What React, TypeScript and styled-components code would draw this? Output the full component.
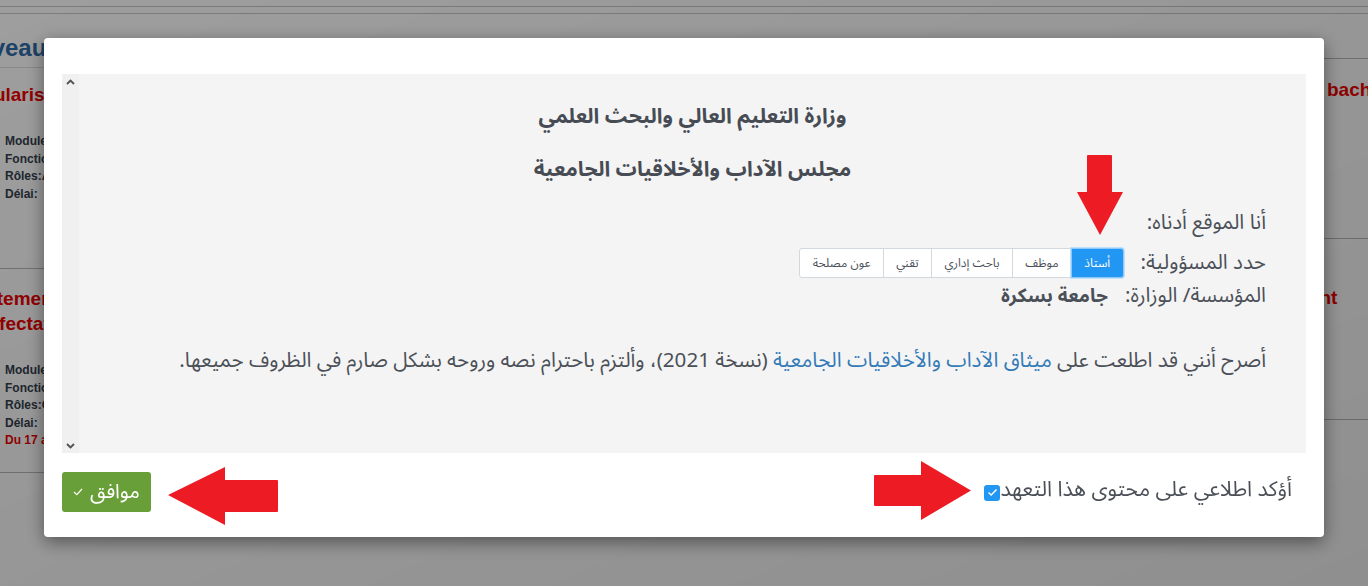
import React from "react";
import styled, { createGlobalStyle } from "styled-components";

const Global = createGlobalStyle`
  html, body { margin: 0; padding: 0; }
  body {
    width: 1368px;
    height: 586px;
    overflow: hidden;
    background: #fff;
    font-family: "Liberation Sans", Arial, sans-serif;
  }
`;

const arabic = `"Noto Sans Arabic", "Noto Naskh Arabic", "DejaVu Sans", sans-serif`;

/* ---------- page behind the dialog ---------- */

const Page = styled.div`
  height: 586px;
  overflow: hidden;
  display: flex;
  flex-direction: column;
`;

const Rule = styled.div`
  height: 6px;
  border-bottom: 1px solid #c8c8c8;
  flex: none;
`;

const Columns = styled.div`
  display: flex;
  justify-content: space-between;
  flex: 1;
`;

const LeftCol = styled.div`
  width: 220px;
  display: flex;
  flex-direction: column;
`;

const RightCol = styled.div`
  width: 44px;
  display: flex;
  flex-direction: column;
`;

const PageTitle = styled.h2`
  margin: 0;
  padding: 20px 0 5px;
  margin-left: -55px;
  font-size: 24px;
  font-weight: 700;
  color: #2f6ba8;
  border-bottom: 1px solid #ddd;
  white-space: nowrap;
`;

const Card = styled.div<{ $h: number }>`
  height: ${(p) => p.$h}px;
  border-bottom: 1px solid #bbb;
  padding: 0 0 0 5px;
  box-sizing: border-box;
  overflow: hidden;
`;

const CardTitle = styled.div<{ $top: number }>`
  margin: ${(p) => p.$top}px 0 26px;
`;

const TitleLine = styled.div<{ $shift: number }>`
  margin-left: ${(p) => p.$shift}px;
  font-size: 19px;
  line-height: 25px;
  font-weight: 700;
  color: #f00000;
  white-space: nowrap;
`;

const Meta = styled.div<{ $red?: boolean }>`
  font-size: 12px;
  line-height: 17.5px;
  font-weight: 700;
  color: ${(p) => (p.$red ? "#f00000" : "#34404d")};
  white-space: nowrap;
`;

const SideCard = styled.div<{ $h: number }>`
  height: ${(p) => p.$h}px;
  border-bottom: 1px solid #bbb;
  box-sizing: border-box;
  padding-left: 3px;
  overflow: hidden;
`;

const SideTitle = styled.div<{ $top: number; $shift?: number }>`
  margin-top: ${(p) => p.$top}px;
  margin-left: ${(p) => p.$shift ?? 0}px;
  font-size: 19px;
  font-weight: 700;
  color: #f00000;
  white-space: nowrap;
`;

/* ---------- dialog ---------- */

const Backdrop = styled.div`
  position: fixed;
  inset: 0;
  background: linear-gradient(
    to bottom right,
    rgba(0, 0, 0, 0.38),
    rgba(0, 0, 0, 0.44)
  );
  display: flex;
  justify-content: center;
  align-items: flex-start;
`;

const Dialog = styled.div`
  position: relative;
  margin-top: 38px;
  width: 1280px;
  box-sizing: border-box;
  padding: 36px 18px 25px;
  background: #fff;
  border-radius: 4px;
  box-shadow: 0 5px 18px rgba(0, 0, 0, 0.45);
  direction: rtl;
  font-family: ${arabic};
`;

const ScrollBox = styled.div`
  height: 379px;
  display: flex;
  background: #f4f4f4;
`;

const Content = styled.div`
  flex: 1;
  padding: 24px 40px 0 40px;
  color: #4b5058;
`;

const ScrollRail = styled.div`
  width: 17px;
  flex: none;
  background: #f0f0f0;
  display: flex;
  flex-direction: column;
  justify-content: space-between;
  align-items: center;
  padding: 5px 0 4px;
  box-sizing: border-box;
`;

const Heading = styled.h3<{ $gap?: number }>`
  margin: ${(p) => p.$gap ?? 0}px 0 0;
  text-align: center;
  font-size: 21px;
  line-height: 36px;
  font-weight: 700;
  color: #474c54;
`;

const Line = styled.div<{ $gap: number }>`
  margin-top: ${(p) => p.$gap}px;
  display: flex;
  align-items: center;
  gap: 17px;
  font-size: 20.6px;
  line-height: 26px;
`;

const Strong = styled.span`
  font-weight: 700;
  font-size: 19px;
`;

const RoleGroup = styled.div`
  display: inline-flex;
  height: 30px;
`;

const RoleButton = styled.button<{ $active?: boolean }>`
  font-family: ${arabic};
  font-size: 12px;
  height: 30px;
  padding: 0 12.4px;
  margin: 0;
  border: 1px solid ${(p) => (p.$active ? "#8ec8f8" : "#d3d8de")};
  margin-left: -1px;
  background: ${(p) => (p.$active ? "#2196f3" : "#fff")};
  color: ${(p) => (p.$active ? "#fff" : "#4b5058")};
  border-radius: 0;
  box-shadow: ${(p) => (p.$active ? "0 0 0 1px #bfe0fb" : "none")};
  position: relative;
  z-index: ${(p) => (p.$active ? 1 : 0)};
  &:first-child { border-radius: 0 3px 3px 0; }
  &:last-child { border-radius: 3px 0 0 3px; margin-left: 0; }
`;

const Paragraph = styled.p`
  margin: 39px 0 0;
  font-size: 20.6px;
  line-height: 26px;
`;

const Link = styled.a`
  color: #337ab7;
  text-decoration: none;
`;

const Footer = styled.div`
  margin-top: 19px;
  height: 40px;
  display: flex;
  justify-content: space-between;
  align-items: center;
  padding-right: 14px;
`;

const Agree = styled.label`
  display: flex;
  align-items: center;
  font-size: 21.2px;
  color: #4b5058;
  margin-top: -5px;
`;

const Box = styled.span`
  width: 16px;
  height: 16px;
  border-radius: 3px;
  background: #2196f3;
  display: inline-flex;
  align-items: center;
  justify-content: center;
  margin-top: 6px;
`;

const OkButton = styled.button`
  height: 40px;
  padding: 0 11px;
  border: none;
  border-radius: 3px;
  background: #689f38;
  color: #fff;
  font-family: ${arabic};
  font-size: 20px;
  display: inline-flex;
  align-items: center;
  gap: 7px;
`;

const Pointer = styled.svg<{ $x: number; $y: number }>`
  position: absolute;
  left: ${(p) => p.$x}px;
  top: ${(p) => p.$y}px;
`;

const Chevron = ({ up }: { up?: boolean }) => (
  <svg width="9" height="6" viewBox="0 0 9 6">
    <path
      d={up ? "M1 5 L4.5 1.5 L8 5" : "M1 1 L4.5 4.5 L8 1"}
      fill="none"
      stroke="#505050"
      strokeWidth="1.8"
    />
  </svg>
);

const roles = ["أستاذ", "موظف", "باحث إداري", "تقني", "عون مصلحة"];

export default function App() {
  return (
    <>
      <Global />
      <Page>
        <Rule />
        <Rule />
        <Columns>
          <LeftCol>
            <PageTitle>Nouveau</PageTitle>
            <Card $h={201}>
              <CardTitle $top={14}>
                <TitleLine $shift={-47}>Régularisation</TitleLine>
              </CardTitle>
              <Meta>Module</Meta>
              <Meta>Fonction</Meta>
              <Meta>Rôles:Admin</Meta>
              <Meta>Délai:</Meta>
            </Card>
            <Card $h={204}>
              <CardTitle $top={17}>
                <TitleLine $shift={-42}>Traitement</TitleLine>
                <TitleLine $shift={-26}>Affectation</TitleLine>
              </CardTitle>
              <Meta>Module</Meta>
              <Meta>Fonction</Meta>
              <Meta>Rôles:Chef</Meta>
              <Meta>Délai:</Meta>
              <Meta $red>Du 17 au</Meta>
            </Card>
          </LeftCol>
          <RightCol>
            <SideCard $h={45} />
            <SideCard $h={180}>
              <SideTitle $top={20}>bachelier</SideTitle>
            </SideCard>
            <SideCard $h={181}>
              <SideTitle $top={48} $shift={-35}>ment</SideTitle>
            </SideCard>
          </RightCol>
        </Columns>
      </Page>

      <Backdrop>
        <Dialog>
          <ScrollBox>
            <Content>
              <Heading>وزارة التعليم العالي والبحث العلمي</Heading>
              <Heading $gap={17}>مجلس الآداب والأخلاقيات الجامعية</Heading>
              <Line $gap={23}>أنا الموقع أدناه:</Line>
              <Line $gap={12}>
                <span>حدد المسؤولية:</span>
                <RoleGroup>
                  {roles.map((r, i) => (
                    <RoleButton key={r} $active={i === 0}>
                      {r}
                    </RoleButton>
                  ))}
                </RoleGroup>
              </Line>
              <Line $gap={5}>
                <span>المؤسسة/ الوزارة:</span>
                <Strong>جامعة بسكرة</Strong>
              </Line>
              <Paragraph>
                أصرح أنني قد اطلعت على{" "}
                <Link>ميثاق الآداب والأخلاقيات الجامعية</Link> (نسخة 2021)،
                وألتزم باحترام نصه وروحه بشكل صارم في الظروف جميعها.
              </Paragraph>
            </Content>
            <ScrollRail>
              <Chevron up />
              <Chevron />
            </ScrollRail>
          </ScrollBox>

          <Footer>
            <Agree>
              أؤكد اطلاعي على محتوى هذا التعهد
              <Box>
                <svg width="11" height="9" viewBox="0 0 11 9">
                  <path
                    d="M1.5 4.5 L4.2 7 L9.5 1.5"
                    fill="none"
                    stroke="#fff"
                    strokeWidth="1.4"
                  />
                </svg>
              </Box>
            </Agree>
            <OkButton>
              موافق
              <svg width="10" height="8" viewBox="0 0 10 8">
                <path
                  d="M1 4 L3.8 6.6 L9 1"
                  fill="none"
                  stroke="#fff"
                  strokeWidth="1.2"
                />
              </svg>
            </OkButton>
          </Footer>

          {/* red pointers drawn over the dialog */}
          <Pointer $x={1033} $y={117} width="46" height="80" viewBox="0 0 46 80">
            <path d="M10 1 Q10 0 11 0 L34 0 Q35 0 35 1 L35 37 L46 37 L23 80 L0 37 L10 37 Z" fill="#ed1c24" />
          </Pointer>
          <Pointer $x={124} $y={429} width="110" height="58" viewBox="0 0 110 58">
            <path d="M0 28 L57 0 L57 13 L109 13 Q110 13 110 14 L110 44 Q110 45 109 45 L57 45 L57 58 Z" fill="#ed1c24" />
          </Pointer>
          <Pointer $x={830} $y={423} width="97" height="59" viewBox="0 0 97 59">
            <path d="M97 29.5 L47 0 L47 14 L1 14 Q0 14 0 15 L0 44 Q0 45 1 45 L47 45 L47 59 Z" fill="#ed1c24" />
          </Pointer>
        </Dialog>
      </Backdrop>
    </>
  );
}
